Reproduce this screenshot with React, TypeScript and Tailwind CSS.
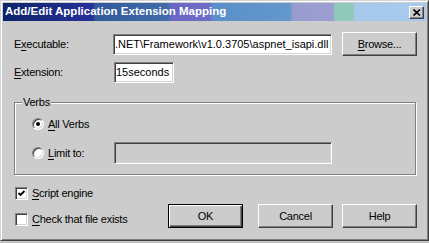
import React from "react";

const sunken =
  "border border-t-[#808080] border-l-[#808080] border-b-white border-r-white shadow-[inset_1px_1px_0_#404040,inset_-1px_-1px_0_#d4d4d4]";
const raised =
  "bg-[#cccccc] border border-t-white border-l-white border-b-[#404040] border-r-[#404040] shadow-[inset_-1px_-1px_0_#808080]";

const U = ({ children }: { children: React.ReactNode }) => (
  <span className="underline underline-offset-[2px] decoration-1">{children}</span>
);

const Radio = ({ checked }: { checked?: boolean }) => (
  <div className={`flex h-[12px] w-[12px] items-center justify-center rounded-full bg-white ${sunken}`}>
    {checked && <div className="h-[4px] w-[4px] rounded-full bg-black" />}
  </div>
);

const Check = ({ checked }: { checked?: boolean }) => (
  <div className={`flex h-[13px] w-[13px] items-center justify-center bg-white ${sunken}`}>
    {checked && (
      <svg width="9" height="9" viewBox="0 0 9 9">
        <path d="M1.5 4 L3.5 6 L7.5 2" stroke="#000" strokeWidth="1.8" fill="none" />
      </svg>
    )}
  </div>
);

const Button = ({ children, def }: { children: React.ReactNode; def?: boolean }) =>
  def ? (
    <button className="flex h-[24px] w-[75px] items-center justify-center border border-black bg-[#cccccc] shadow-[inset_1px_1px_0_#fff,inset_-1px_-1px_0_#404040,inset_-2px_-2px_0_#808080]">
      {children}
    </button>
  ) : (
    <button className={`flex h-[24px] w-[75px] items-center justify-center ${raised}`}>{children}</button>
  );

export default function App() {
  return (
    <div className="h-[243px] w-[429px] overflow-hidden bg-[#c4c4c4]">
      <div className="flex h-[241px] w-[429px] flex-col border border-t-[#d4d4d4] border-l-[#d4d4d4] border-b-[#404040] border-r-[#404040] bg-[#cccccc] p-[2px] font-['Liberation_Sans',Arial,sans-serif] text-[11px] tracking-[-0.25px] text-black shadow-[inset_1px_1px_0_#fff,inset_-1px_-1px_0_#808080]">
        {/* title bar */}
        <div className="flex h-[18px] items-center justify-between bg-[linear-gradient(to_right,#0c2468_0px,#28309a_90px,#30599a_92px,#416ca8_165px,#6a66c4_168px,#6e6ec8_207px,#5a90c8_210px,#6298cc_287px,#9a9cd0_290px,#9c9ed2_330px,#8ecab6_332px,#92c8bc_350px,#a6c8ec_352px,#a8caee_100%)] pl-[2px] pr-[2px]">
          <span className="text-[11.5px] font-bold tracking-normal text-white">
            Add/Edit Application Extension Mapping
          </span>
          <div className={`flex h-[13px] w-[15px] items-center justify-center ${raised}`}>
            <svg width="8" height="7" viewBox="0 0 8 7">
              <path d="M0.5 0.5 L7 6.5 M7 0.5 L0.5 6.5" stroke="#000" strokeWidth="1.6" />
            </svg>
          </div>
        </div>

        <div className="flex flex-col pl-[11px] pr-[9px]">
          {/* executable */}
          <div className="mt-[11px] flex h-[24px] items-center">
            <span className="w-[99px]">
              E<U>x</U>ecutable:
            </span>
            <div className={`flex h-[21px] w-[219px] items-center overflow-hidden whitespace-nowrap bg-white pl-[1px] tracking-normal ${sunken}`}>
              .NET\Framework\v1.0.3705\aspnet_isapi.dll
            </div>
            <div className="ml-[10px]">
              <Button>
                <U>B</U>rowse...
              </Button>
            </div>
          </div>

          {/* extension */}
          <div className="mt-[6px] flex h-[21px] items-center">
            <span className="w-[100px]">
              <U>E</U>xtension:
            </span>
            <div className={`flex h-[21px] w-[60px] items-center bg-white pl-[1px] tracking-normal ${sunken}`}>
              15seconds
            </div>
          </div>

          {/* verbs group */}
          <div className="relative mt-[19px] h-[73px] w-[402px] border border-[#808080] pl-[17px] pt-[13px] shadow-[inset_1px_1px_0_#fff,1px_1px_0_#fff]">
            <span className="absolute -top-[8px] left-[7px] bg-[#cccccc] px-[1px] leading-[14px]">Verbs</span>
            <div className="flex h-[16px] items-center gap-[4px]">
              <Radio checked />
              <span>
                <U>A</U>ll Verbs
              </span>
            </div>
            <div className="mt-[10px] flex h-[22px] items-center">
              <div className="flex w-[82px] items-center gap-[4px]">
                <Radio />
                <span>
                  <U>L</U>imit to:
                </span>
              </div>
              <div className={`h-[22px] w-[218px] bg-[#cccccc] ${sunken}`} />
            </div>
          </div>

          {/* bottom */}
          <div className="flex justify-between">
            <div className="flex flex-col pt-[11px] pl-[1px]">
              <div className="flex h-[14px] items-center gap-[4px]">
                <Check checked />
                <span>
                  <U>S</U>cript engine
                </span>
              </div>
              <div className="mt-[12px] flex h-[14px] items-center gap-[4px]">
                <Check />
                <span>
                  <U>C</U>heck that file exists
                </span>
              </div>
            </div>
            <div className="mt-[29px] flex">
              <Button def>OK</Button>
              <div className="ml-[15px]">
                <Button>Cancel</Button>
              </div>
              <div className="ml-[9px]">
                <Button>Help</Button>
              </div>
            </div>
          </div>
        </div>
      </div>
    </div>
  );
}
